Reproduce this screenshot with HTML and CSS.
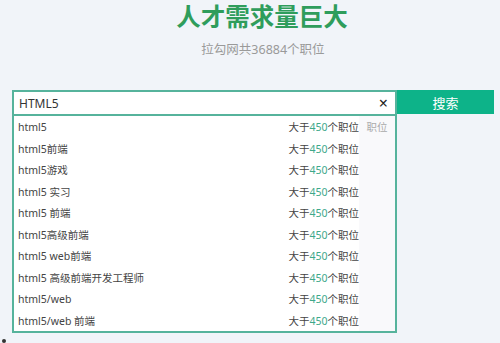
FILE: index.html
```html
<!DOCTYPE html>
<html lang="zh">
<head>
<meta charset="utf-8">
<link rel="stylesheet" href="styles.css">
</head>
<body>
<div class="page">
  <h1 class="title">人才需求量巨大</h1>
  <p class="subtitle">拉勾网共36884个职位</p>
  <div class="search">
    <div class="box">
      <div class="input"><span class="query">HTML5</span><span class="clear">×</span></div>
      <ul class="list">
        <li class="row"><span class="name">html5</span><span class="count">大于<em>450</em>个职位</span><span class="type">职位</span></li>
        <li class="row"><span class="name">html5前端</span><span class="count">大于<em>450</em>个职位</span><span class="type"></span></li>
        <li class="row"><span class="name">html5游戏</span><span class="count">大于<em>450</em>个职位</span><span class="type"></span></li>
        <li class="row"><span class="name">html5 实习</span><span class="count">大于<em>450</em>个职位</span><span class="type"></span></li>
        <li class="row"><span class="name">html5 前端</span><span class="count">大于<em>450</em>个职位</span><span class="type"></span></li>
        <li class="row"><span class="name">html5高级前端</span><span class="count">大于<em>450</em>个职位</span><span class="type"></span></li>
        <li class="row"><span class="name">html5 web前端</span><span class="count">大于<em>450</em>个职位</span><span class="type"></span></li>
        <li class="row"><span class="name">html5 高级前端开发工程师</span><span class="count">大于<em>450</em>个职位</span><span class="type"></span></li>
        <li class="row"><span class="name">html5/web</span><span class="count">大于<em>450</em>个职位</span><span class="type"></span></li>
        <li class="row"><span class="name">html5/web 前端</span><span class="count">大于<em>450</em>个职位</span><span class="type"></span></li>
      </ul>
    </div>
    <button class="btn">搜索</button>
  </div>
  <ul class="stray"><li></li></ul>
</div>
</body>
</html>
```
FILE: styles.css
```css
html, body {
  margin: 0;
  padding: 0;
  background: #f1f4f9;
}
body {
  font-family: "Noto Sans", "Noto Sans CJK SC", sans-serif;
  color: #333;
  width: 500px;
  height: 343px;
  overflow: hidden;
}
.page {
  padding-top: 3px;
}
.title {
  margin: 0;
  text-align: center;
  font-size: 24.5px;
  line-height: 28px;
  font-weight: 700;
  color: #2f9d5c;
  padding-left: 24px;
}
.subtitle {
  margin: 9px 0 0;
  text-align: center;
  font-size: 12.5px;
  line-height: 20px;
  color: #9a9a9a;
  padding-left: 26px;
}
.search {
  display: flex;
  align-items: flex-start;
  margin: 30px 0 0 12px;
}
.box {
  width: 385px;
  box-sizing: border-box;
  border: 2px solid #56b39c;
  background: #fff;
}
.input {
  height: 24px;
  box-sizing: border-box;
  border-bottom: 2px solid #56b39c;
  display: flex;
  align-items: center;
  justify-content: space-between;
  padding: 0 7px 0 5px;
}
.query {
  font-size: 12px;
  color: #333;
}
.clear {
  font-size: 16px;
  line-height: 16px;
  color: #222;
}
.list {
  list-style: none;
  margin: 0;
  padding: 0;
}
.row {
  display: grid;
  grid-template-columns: 1fr auto 36px;
  height: 21.5px;
  align-items: center;
  font-size: 10.5px;
  color: #444;
}
.name {
  padding-left: 4px;
}
.count {
  text-align: right;
}
.count em {
  font-style: normal;
  color: #3ea88a;
}
.type {
  align-self: stretch;
  display: flex;
  align-items: center;
  justify-content: center;
  color: #aaa;
  background: #f9f9fb;
}
.btn {
  width: 97px;
  height: 24px;
  border: 0;
  background: #0db389;
  color: #fff;
  font-family: inherit;
  font-size: 13px;
  padding: 0;
}
.stray {
  margin: 1px 0 0;
  padding-left: 16px;
  font-size: 10px;
  line-height: 12px;
}
```
